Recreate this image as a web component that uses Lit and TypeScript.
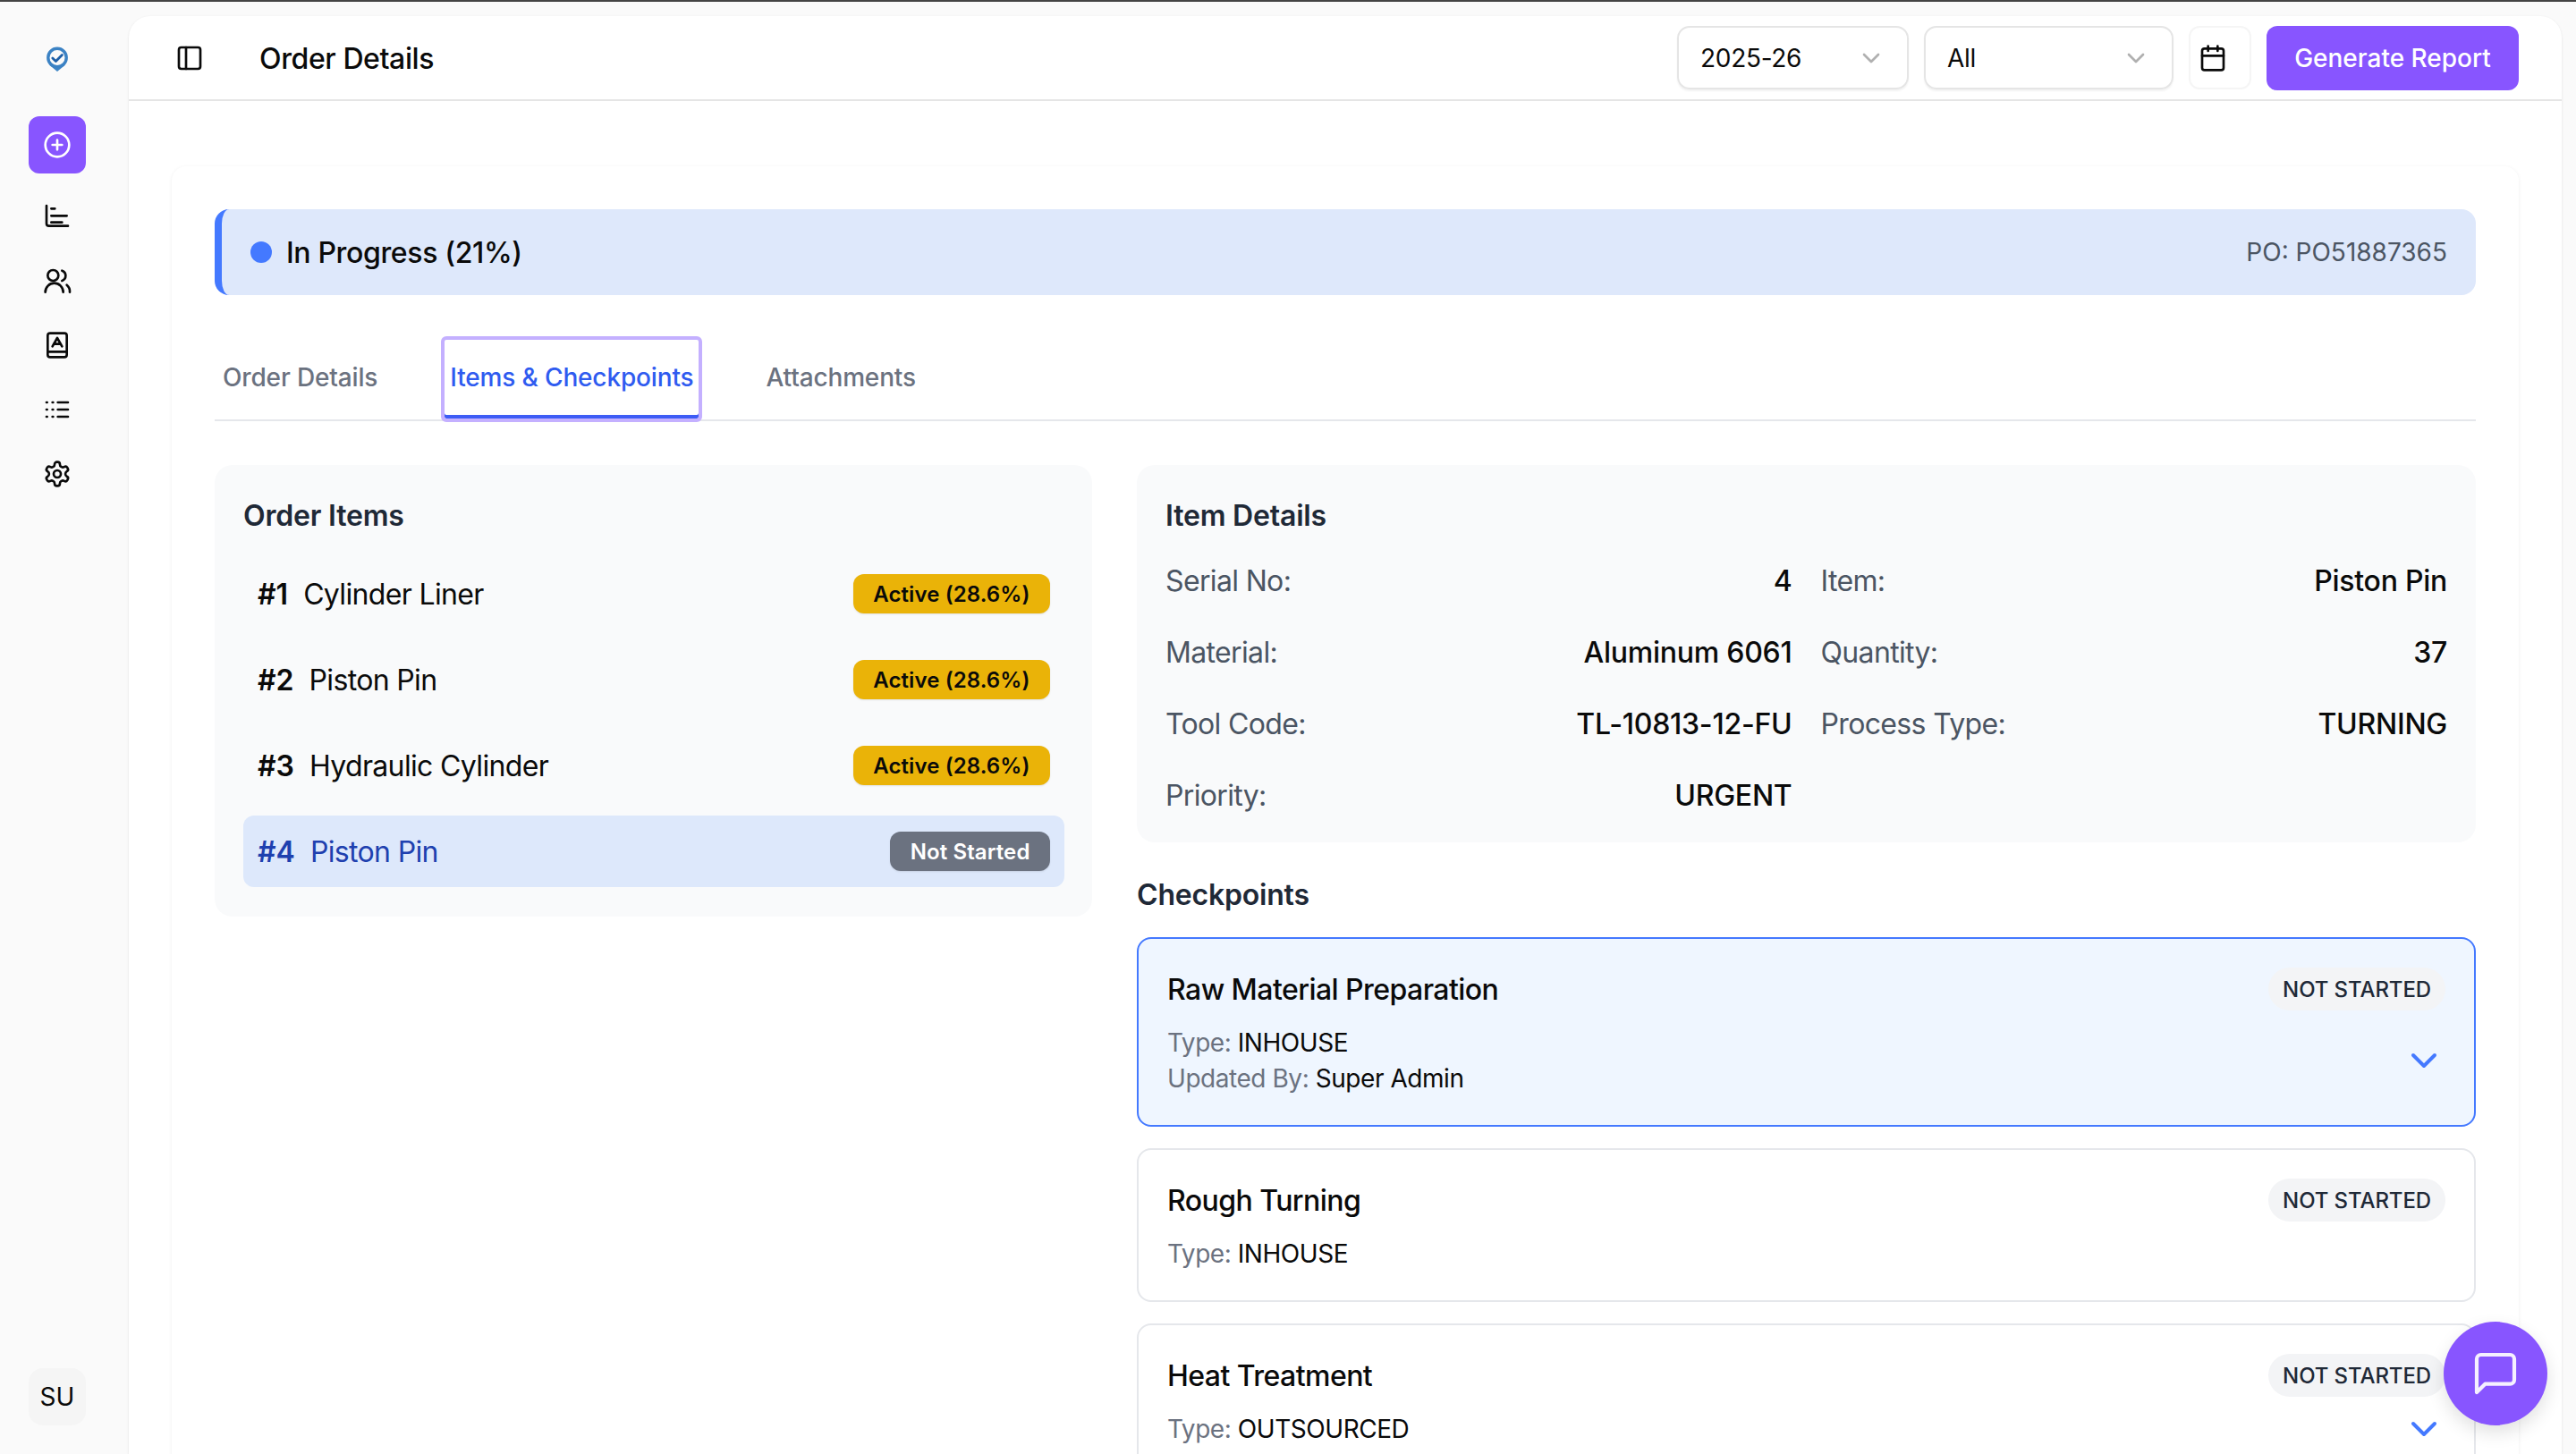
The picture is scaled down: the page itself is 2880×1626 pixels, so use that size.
import { LitElement, css, html, svg } from 'lit';
import { customElement } from 'lit/decorators.js';

const icon = (body: unknown, size = 32, width = 2) => html`
  <svg width=${size} height=${size} viewBox="0 0 24 24" fill="none" stroke="currentColor"
    stroke-width=${width} stroke-linecap="round" stroke-linejoin="round">${body}</svg>
`;

const icons = {
  plus: svg`<circle cx="12" cy="12" r="10"/><path d="M8 12h8M12 8v8"/>`,
  chart: svg`<path d="M3 3v15a2 2 0 0 0 2 2h16M7 5.5h3M7 11.5h13M7 17h9"/>`,
  users: svg`<path d="M2 21.5a7.5 7.5 0 0 1 15 0"/><circle cx="8.5" cy="7.5" r="4.5"/><path d="M16 3.5a4.5 4.5 0 0 1 0 8.5M20 15.5a7 7 0 0 1 2.5 6"/>`,
  book: svg`<path d="M4 20V4a2 2 0 0 1 2-2h12a2 2 0 0 1 2 2v16a2 2 0 0 1-2 2H6a2 2 0 0 1-2-2ZM4 17.5h16M8 13l4-7 4 7M9.1 11h5.8"/>`,
  list: svg`<path d="M3 6h.5M8 6h.5M3 12h.5M8 12h.5M3 18h.5M8 18h.5M12.5 6H21M12.5 12H21M12.5 18H21"/>`,
  gear: svg`<path d="M12.22 2h-.44a2 2 0 0 0-2 2v.18a2 2 0 0 1-1 1.73l-.43.25a2 2 0 0 1-2 0l-.15-.08a2 2 0 0 0-2.73.73l-.22.38a2 2 0 0 0 .73 2.73l.15.1a2 2 0 0 1 1 1.72v.51a2 2 0 0 1-1 1.74l-.15.09a2 2 0 0 0-.73 2.73l.22.38a2 2 0 0 0 2.73.73l.15-.08a2 2 0 0 1 2 0l.43.25a2 2 0 0 1 1 1.73V20a2 2 0 0 0 2 2h.44a2 2 0 0 0 2-2v-.18a2 2 0 0 1 1-1.73l.43-.25a2 2 0 0 1 2 0l.15.08a2 2 0 0 0 2.73-.73l.22-.39a2 2 0 0 0-.73-2.73l-.15-.08a2 2 0 0 1-1-1.74v-.5a2 2 0 0 1 1-1.74l.15-.09a2 2 0 0 0 .73-2.73l-.22-.38a2 2 0 0 0-2.73-.73l-.15.08a2 2 0 0 1-2 0l-.43-.25a2 2 0 0 1-1-1.73V4a2 2 0 0 0-2-2z"/><circle cx="12" cy="12" r="3"/>`,
  panel: svg`<rect x="3" y="3" width="18" height="18" rx="2"/><path d="M9 3v18"/>`,
  calendar: svg`<rect x="3" y="4" width="18" height="18" rx="2"/><path d="M8 2v4M16 2v4M3 10h18"/>`,
  chevron: svg`<path d="m6 9 6 6 6-6"/>`,
  chat: svg`<path d="M21 15a2 2 0 0 1-2 2H7l-4 4V5a2 2 0 0 1 2-2h14a2 2 0 0 1 2 2z"/>`,
};

const navItems = [icons.chart, icons.users, icons.book, icons.list, icons.gear];

const orderItems = [
  { no: 1, name: 'Cylinder Liner', status: 'Active (28.6%)', active: true },
  { no: 2, name: 'Piston Pin', status: 'Active (28.6%)', active: true },
  { no: 3, name: 'Hydraulic Cylinder', status: 'Active (28.6%)', active: true },
  { no: 4, name: 'Piston Pin', status: 'Not Started', active: false },
];

const details = [
  ['Serial No:', '4'],
  ['Item:', 'Piston Pin'],
  ['Material:', 'Aluminum 6061'],
  ['Quantity:', '37'],
  ['Tool Code:', 'TL-10813-12-FU'],
  ['Process Type:', 'TURNING'],
  ['Priority:', 'URGENT'],
];

const checkpoints = [
  { title: 'Raw Material Preparation', type: 'INHOUSE', by: 'Super Admin', open: true, chevron: true },
  { title: 'Rough Turning', type: 'INHOUSE', by: '', open: false, chevron: false },
  { title: 'Heat Treatment', type: 'OUTSOURCED', by: '', open: false, chevron: true },
];

@customElement('app-root')
export class AppRoot extends LitElement {
  static styles = css`
    :host {
      display: flex;
      height: 1626px;
      overflow: hidden;
      position: relative;
      box-sizing: border-box;
      border-top: 2px solid #444;
      background: #fafafa;
      font-family: Inter, 'Liberation Sans', sans-serif;
      color: #0a0a0a;
    }
    * { box-sizing: border-box; }
    svg { display: block; flex: none; }

    .sidebar {
      width: 144px;
      flex: none;
      display: flex;
      flex-direction: column;
      align-items: center;
      padding: 50px 16px 0 0;
    }
    .logo { height: 28px; margin-bottom: 50px; }
    .nav-active {
      width: 64px;
      height: 64px;
      border-radius: 12px;
      background: #8855ff;
      color: #fff;
      display: flex;
      align-items: center;
      justify-content: center;
      margin-bottom: 12px;
    }
    .nav {
      width: 64px;
      height: 72px;
      display: flex;
      align-items: center;
      justify-content: center;
      color: #0a0a0a;
    }
    .avatar {
      margin-top: auto;
      margin-bottom: 32px;
      width: 64px;
      height: 64px;
      border-radius: 16px;
      background: #f5f5f5;
      display: flex;
      align-items: center;
      justify-content: center;
      font-size: 28px;
    }

    .panel {
      flex: 1;
      min-width: 0;
      margin: 16px 16px 0 0;
      background: #fff;
      border-radius: 24px 24px 0 0;
      box-shadow: 0 1px 3px rgba(0, 0, 0, 0.1);
    }
    .header {
      height: 95px;
      border-bottom: 2px solid #e5e5e5;
      display: flex;
      align-items: center;
      padding: 0 48px 0 52px;
    }
    .title { font-size: 32px; font-weight: 500; letter-spacing: -0.4px; margin-left: 62px; margin-right: auto; padding-top: 1px; }
    .select {
      height: 71px;
      border: 2px solid #e5e5e5;
      border-radius: 14px;
      box-shadow: 0 2px 2px rgba(0, 0, 0, 0.05);
      display: flex;
      align-items: center;
      justify-content: space-between;
      font-size: 28px;
      letter-spacing: -0.3px;
      color: #b0b0b0;
      padding: 0 24px;
      margin-right: 17px;
    }
    .select span { color: #0a0a0a; }
    .select.year { width: 259px; }
    .select.scope { width: 279px; }
    .cal {
      width: 70px;
      height: 71px;
      border: 2px solid #f5f5f5;
      border-radius: 12px;
      display: flex;
      align-items: center;
      padding-left: 9px;
      margin-right: 17px;
    }
    .generate {
      width: 282px;
      height: 72px;
      border-radius: 12px;
      background: #8855ff;
      color: #fff;
      font-size: 28px;
      font-weight: 500;
      display: flex;
      align-items: center;
      justify-content: center;
    }

    .content { padding: 73px 48px 0; }
    .card {
      background: #fff;
      border-radius: 16px 16px 0 0;
      box-shadow: 0 1px 4px rgba(0, 0, 0, 0.07);
      padding: 48px 48px 0;
    }
    .banner {
      height: 96px;
      border-left: 8px solid #4479ff;
      border-radius: 16px;
      background: #dee8fb;
      display: flex;
      align-items: center;
      padding: 0 32px 0 32px;
    }
    .dot { width: 24px; height: 24px; border-radius: 50%; background: #4479ff; margin-right: 16px; }
    .state { font-size: 32px; font-weight: 500; letter-spacing: -0.36px; margin-right: auto; }
    .po { font-size: 28px; color: #4b5563; }

    .tabs {
      display: flex;
      gap: 62px;
      margin-top: 46px;
      border-bottom: 2px solid #e5e7eb;
    }
    .tab {
      height: 95px;
      margin-bottom: -2px;
      padding: 0 9px 3px;
      display: flex;
      align-items: center;
      font-size: 28px;
      font-weight: 500;
      letter-spacing: -0.15px;
      color: #6b7280;
      border-radius: 6px;
    }
    .tab.on {
      height: 96px;
      margin-bottom: -3px;
      color: #2f5bf0;
      padding: 0 6px 4px;
      border: 4px solid #c4b0ff;
      box-shadow: inset 0 -4px 0 #3d5cf5;
    }

    .columns {
      display: grid;
      grid-template-columns: 981px 1fr;
      gap: 50px;
      align-items: start;
      margin-top: 49px;
    }
    .box { background: #f9fafb; border-radius: 20px; padding: 32px; }
    h2 {
      margin: 0;
      height: 50px;
      line-height: 50px;
      font-size: 32px;
      font-weight: 600;
      letter-spacing: -0.2px;
      color: #1f2937;
    }
    .rows { display: flex; flex-direction: column; gap: 16px; margin: 22px -1px 1px 0; }
    .row {
      height: 80px;
      width: 918px;
      border-radius: 12px;
      padding: 0 16px;
      display: flex;
      align-items: center;
      font-size: 32px;
      letter-spacing: -0.65px;
    }
    .row.on { background: #dde8fb; color: #1e40af; }
    .row b { font-weight: 600; letter-spacing: 0; margin-right: 17px; }
    .badge {
      margin-left: auto;
      height: 44px;
      padding: 0 22.5px;
      border-radius: 12px;
      display: flex;
      align-items: center;
      font-size: 24px;
      font-weight: 600;
      letter-spacing: 0.1px;
      background: #eab308;
      color: #0a0a0a;
      box-shadow: 0 1px 2px rgba(0, 0, 0, 0.1);
    }
    .badge.idle { background: #6b7280; color: #fff; }

    .facts {
      display: grid;
      grid-template-columns: 1fr 1fr;
      gap: 32px;
      margin-top: 23px;
      margin-bottom: -3px;
    }
    .fact {
      height: 48px;
      display: flex;
      align-items: center;
      justify-content: space-between;
      font-size: 32px;
      letter-spacing: -0.65px;
      color: #4b5563;
    }
    .fact strong { font-weight: 500; letter-spacing: -0.25px; color: #0a0a0a; }

    .check-title { margin-top: 34px; color: #1f2937; }
    .cards { display: flex; flex-direction: column; gap: 24px; margin-top: 22px; }
    .check {
      border: 2px solid #e5e7eb;
      border-radius: 16px;
      padding: 32px;
    }
    .check.on { border-color: #4479ff; background: #eff6ff; }
    .check-top { display: flex; align-items: center; justify-content: space-between; }
    .check-name { font-size: 32px; font-weight: 500; letter-spacing: -0.55px; }
    .pill {
      height: 48px;
      padding: 0 16px;
      border-radius: 24px;
      background: #f3f4f6;
      display: flex;
      align-items: center;
      font-size: 24px;
      font-weight: 500;
      letter-spacing: -0.1px;
      color: #1f2937;
    }
    .check-body { display: flex; align-items: center; justify-content: space-between; margin-top: 16px; }
    .meta { font-size: 28px; line-height: 40px; letter-spacing: -0.45px; color: #0a0a0a; }
    .meta em { font-style: normal; color: #6b7280; }
    .chev { color: #4479ff; margin: -4px 0; }

    /* floats over the page */
    .fab {
      position: absolute;
      left: 2732px;
      top: 1476px;
      width: 116px;
      height: 116px;
      border-radius: 50%;
      background: #8855ff;
      color: #f5f0ff;
      display: flex;
      align-items: center;
      justify-content: center;
      box-shadow: 0 8px 20px rgba(0, 0, 0, 0.12);
    }
  `;

  render() {
    return html`
      <aside class="sidebar">
        <svg class="logo" width="28" height="28" viewBox="0 0 28 28" fill="none">
          <path d="M5 20.5 14 28l9-7.5z" fill="#3f86c6"/>
          <circle cx="14" cy="12.5" r="10.2" fill="#fafafa" stroke="#3b82c4" stroke-width="3.4"/>
          <path d="m8.8 13 3.6 3.4 7-7" stroke="#1d5fa8" stroke-width="2.8" stroke-linecap="round" stroke-linejoin="round"/>
        </svg>
        <div class="nav-active">${icon(icons.plus)}</div>
        ${navItems.map((item) => html`<div class="nav">${icon(item)}</div>`)}
        <div class="avatar">SU</div>
      </aside>

      <main class="panel">
        <header class="header">
          ${icon(icons.panel)}
          <div class="title">Order Details</div>
          <div class="select year"><span>2025-26</span>${icon(icons.chevron)}</div>
          <div class="select scope"><span>All</span>${icon(icons.chevron)}</div>
          <div class="cal">${icon(icons.calendar)}</div>
          <div class="generate">Generate Report</div>
        </header>

        <div class="content">
          <section class="card">
            <div class="banner">
              <div class="dot"></div>
              <div class="state">In Progress (21%)</div>
              <div class="po">PO: PO51887365</div>
            </div>

            <nav class="tabs">
              <div class="tab">Order Details</div>
              <div class="tab on">Items &amp; Checkpoints</div>
              <div class="tab">Attachments</div>
            </nav>

            <div class="columns">
              <div class="box">
                <h2>Order Items</h2>
                <div class="rows">
                  ${orderItems.map((item) => html`
                    <div class="row ${item.no === 4 ? 'on' : ''}">
                      <b>#${item.no}</b>${item.name}
                      <div class="badge ${item.active ? '' : 'idle'}">${item.status}</div>
                    </div>
                  `)}
                </div>
              </div>

              <div>
                <div class="box">
                  <h2>Item Details</h2>
                  <div class="facts">
                    ${details.map(([label, value]) => html`
                      <div class="fact"><span>${label}</span><strong>${value}</strong></div>
                    `)}
                  </div>
                </div>

                <h2 class="check-title">Checkpoints</h2>
                <div class="cards">
                  ${checkpoints.map((c) => html`
                    <div class="check ${c.open ? 'on' : ''}">
                      <div class="check-top">
                        <div class="check-name">${c.title}</div>
                        <div class="pill">NOT STARTED</div>
                      </div>
                      <div class="check-body">
                        <div class="meta">
                          <div><em>Type:</em> ${c.type}</div>
                          ${c.by ? html`<div><em>Updated By:</em> ${c.by}</div>` : ''}
                        </div>
                        ${c.chevron ? html`<div class="chev">${icon(icons.chevron, 48)}</div>` : ''}
                      </div>
                    </div>
                  `)}
                </div>
              </div>
            </div>
          </section>
        </div>
      </main>

      <div class="fab">${icon(icons.chat, 56, 1.8)}</div>
    `;
  }
}
